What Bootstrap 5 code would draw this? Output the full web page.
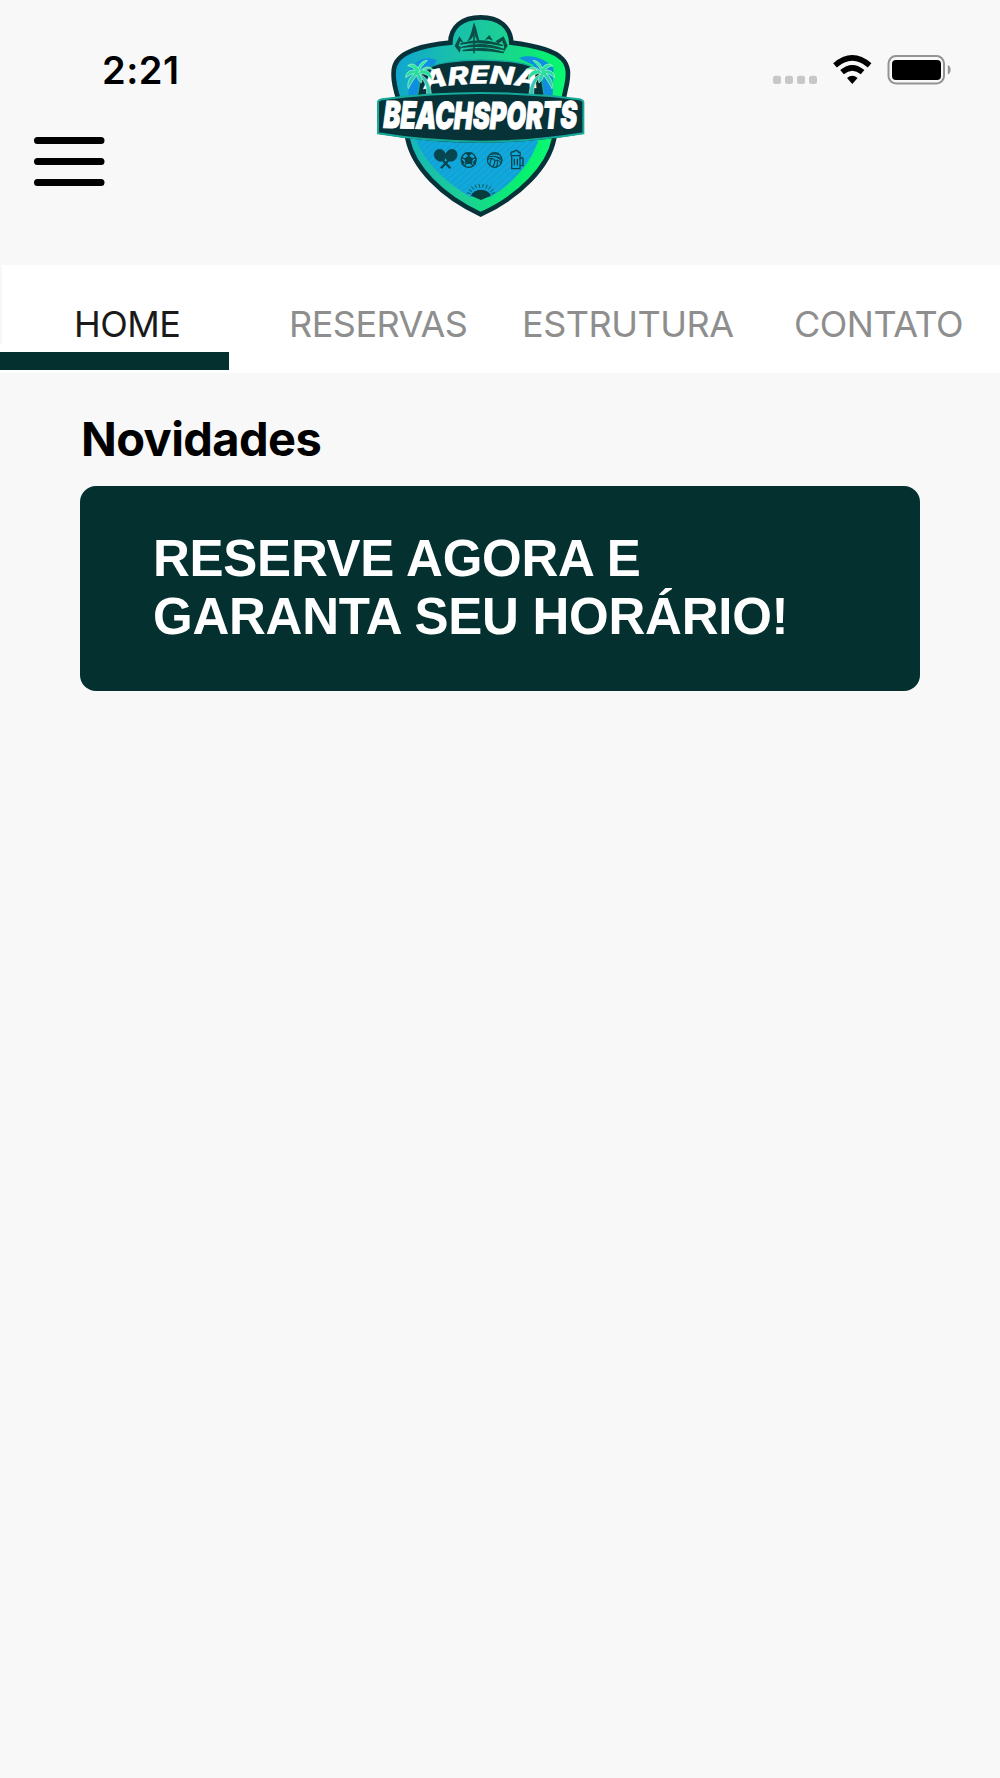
<!DOCTYPE html>
<html lang="pt-BR">
<head>
  <meta charset="UTF-8" />
  <meta name="viewport" content="width=device-width, initial-scale=1.0"/>
  <title>Arena Beachsports</title>
  <link href="https://cdn.jsdelivr.net/npm/bootstrap@5.3.0/dist/css/bootstrap.min.css" rel="stylesheet"/>
  <style>
    body {
      background-color: #f8f8f8;
      font-family: Inter, "Liberation Sans", sans-serif;
      color: #000;
    }
    .app-header {
      height: 265px;
    }
    .header-left {
      width: 360px;
      padding: 48px 0 0 33px;
    }
    .clock {
      font-size: 38px;
      font-weight: 600;
      line-height: 44px;
      padding-left: 69px;
      letter-spacing: 0.5px;
    }
    .menu-btn {
      margin-top: 44px;
    }
    .status-icons {
      padding: 54px 48px 0 0;
    }
    .tab-bar {
      height: 108px;
      background: linear-gradient(#f8f8f8, #f8f8f8) 0 0 / 2px 79px no-repeat #fff;
    }
    .tab-bar .nav-link {
      font-size: 36px;
      line-height: 44px;
      padding: 37px 0 0;
      color: #8e8e8e;
      white-space: nowrap;
      letter-spacing: -0.5px;
    }
    .tab-bar .nav-link.active {
      color: #1a1a1a;
    }
    .tab-home { width: 229px; padding-left: 74px; }
    .tab-reservas { width: 293px; padding-left: 60px; }
    .tab-estrutura { width: 272px; }
    .tab-line {
      height: 18px;
      margin: 6px 0 0 -74px;
      background-color: #043030;
    }
    .content {
      padding: 37px 80px 0;
    }
    .section-title {
      font-size: 47px;
      font-weight: 700;
      line-height: 58px;
      letter-spacing: -0.6px;
      margin: 0 0 18px 1px;
    }
    .banner {
      height: 205px;
      border-radius: 16px;
      background-color: #043030;
      color: #fff;
      padding: 44px 73px;
      font: bold 51px/58px "Liberation Sans", Arial, sans-serif;
      letter-spacing: -0.25px;
    }
  </style>
</head>
<body>

  <!-- Header: clock, menu, logo and status icons -->
  <header class="app-header d-flex align-items-start">
    <div class="header-left">
      <div class="clock">2:21</div>
      <button class="menu-btn btn p-0 border-0 d-block" type="button" aria-label="Menu">
        <svg class="d-block" width="72" height="51" viewBox="0 0 72 51" stroke="#000" stroke-width="7" stroke-linecap="round">
          <path d="M4.5 4.5H68M4.5 25.5H68M4.5 46.5H68"/>
        </svg>
      </button>
    </div>

    <svg width="240" height="230" viewBox="0 0 720 690" role="img" aria-label="Arena Beachsports">
      <defs>
        <linearGradient id="shield" x1="100" y1="230" x2="610" y2="340" gradientUnits="userSpaceOnUse">
          <stop offset="0" stop-color="#0fa6d0"/>
          <stop offset=".25" stop-color="#18bcb0"/>
          <stop offset=".55" stop-color="#1ccf94"/>
          <stop offset=".85" stop-color="#08f070"/>
          <stop offset="1" stop-color="#0cfa74"/>
        </linearGradient>
        <linearGradient id="palmLeft" x2="0" y2="1">
          <stop offset="0" stop-color="#25f58c"/>
          <stop offset="1" stop-color="#2cc0b6"/>
        </linearGradient>
        <pattern id="stripes" width="14" height="14" patternUnits="userSpaceOnUse" patternTransform="rotate(-42)">
          <rect width="14" height="14" fill="#0faadd"/>
          <rect width="14" height="4" fill="#179bcf"/>
        </pattern>
      </defs>

      <!-- Shield -->
      <path d="M362 52C417 52 452 80 454 128C520 136 583 152 607 177C628 198 625 226 621 250L610 300L582 418C565 500 482 588 362 643C242 588 160 500 143 418L116 300C103 260 96 222 104 197C119 153 190 136 271 128C272 80 307 52 362 52Z" fill="url(#shield)" stroke="#083239" stroke-width="14"/>
      <path d="M165 410H538C520 482 460 550 392 590H330C255 545 190 485 165 410Z" fill="url(#stripes)"/>
      <path d="M150 210C160 180 205 165 230 181L180 290H145ZM476 174C515 158 565 180 580 205L578 290H535L520 195Z" fill="#108fe0"/>

      <!-- Sailing crown -->
      <g fill="#0a5049">
        <path d="M322 124C335 103 335 89 342 67C352 90 352 106 359 124C351 126 350 117 343 103C337 113 335 120 322 124Z"/>
        <path d="M374 120L388 105L399 122L386 117ZM406 124L431 109L443 137L431 157L432 137L426 123L415 131Z"/>
        <path d="M298 109L284 138L299 158L303 142L296 137L300 124L312 130Z"/>
        <path d="M301 132Q367 111 429 137Q366 122 301 132ZM304 142Q369 123 433 149Q367 133 304 142ZM308 152Q370 137 432 158Q371 146 308 152Z" stroke="#0a5049" stroke-width="4"/>
        <path d="M342 105V160" stroke="#0a5049" stroke-width="5"/>
      </g>

      <!-- ARENA plate -->
      <path d="M172 290L183 224Q205 194 262 187Q362 173 466 187Q520 194 542 220L553 290Z" fill="#063238" stroke="#12a7a0" stroke-width="4"/>
      <path id="arenaLine" d="M192 268Q365 234 550 268" fill="none"/>
      <text font-family="Inter, sans-serif" font-size="74" font-weight="800" font-style="italic" fill="#fff" stroke="#fff" stroke-width="1"><textPath href="#arenaLine" textLength="344" lengthAdjust="spacingAndGlyphs">ARENA</textPath></text>

      <!-- Palm trees -->
      <g id="palm">
        <path d="M175 221C190 224 211 240 214 284H200C201 252 190 238 174 225Z" fill="#32c8b5" stroke="#c6eee0" stroke-width="2"/>
        <path d="M176 218C184 195 196 190 202 181C190 182 178 190 175 205C169 193 154 188 143 197C157 200 160 205 165 211C148 208 137 219 137 233C147 226 153 222 163 221C145 233 141 252 145 266C154 247 163 237 170 225C172 237 177 243 184 249C188 236 184 228 178 222C191 218 207 226 215 240C218 222 204 208 189 210C202 204 212 207 221 211C211 195 190 199 176 218Z" fill="url(#palmLeft)" stroke="#b7f7d7" stroke-width="2"/>
      </g>
      <use href="#palm" transform="translate(721 0) scale(-1 1)"/>

      <!-- BEACHSPORTS ribbon -->
      <path d="M52 306Q54 299 65 297Q362 258 658 297Q670 299 672 306V401Q515 428 362 428Q205 428 52 401Z" fill="#063238"/>
      <path d="M54 400V306Q56 300 66 298Q362 260 657 298Q668 300 670 306V400Q515 425 362 425Q205 425 54 400Z" fill="none" stroke="#16aa99" stroke-width="6"/>
      <path id="beachLine" d="M70 384Q362 390 664 384" fill="none"/>
      <g transform="translate(0 388) scale(1 1.12) translate(0 -388)">
        <text font-family="Inter, sans-serif" font-size="99" font-weight="900" font-style="italic" fill="#fff" stroke="#fff" stroke-width="3"><textPath href="#beachLine" textLength="582" lengthAdjust="spacingAndGlyphs">BEACHSPORTS</textPath></text>
      </g>

      <!-- Rackets -->
      <g fill="#07464e" stroke="#07464e">
        <ellipse cx="240" cy="466" rx="17" ry="19" transform="rotate(-38 240 466)"/>
        <ellipse cx="274" cy="466" rx="17" ry="19" transform="rotate(38 274 466)"/>
        <path d="M247 479L271 505M267 479L243 505" stroke-width="7"/>
      </g>

      <!-- Football -->
      <g fill="none" stroke="#07464e" stroke-width="4">
        <circle cx="326" cy="480" r="22"/>
        <path d="M326 469L337 477L333 490H319L315 477Z" fill="#07464e"/>
        <path d="M326 469V458M337 477L347 472M333 490L340 499M319 490L312 499M315 477L305 472"/>
        <path d="M318 460L326 466L334 460ZM305 480L312 488L307 492ZM347 480L340 488L345 492Z" fill="#07464e"/>
      </g>

      <!-- Volleyball -->
      <g fill="none" stroke="#07464e" stroke-width="3.5">
        <circle cx="404" cy="480" r="22"/>
        <path d="M384 472Q400 464 424 475M391 463Q405 460 419 464M404 480Q395 470 383 479M404 480Q422 480 423 492M404 480Q406 492 397 501M396 476Q389 482 390 497M412 482Q415 492 408 502M405 471Q414 472 426 483"/>
      </g>

      <!-- Beer mug -->
      <g fill="none" stroke="#07464e" stroke-width="4">
        <path d="M455 468V506H480V464M480 474H489V497H480M454 467C450 459 454 453 461 456C465 449 474 451 475 456C482 456 483 462 479 467ZM463 476V496M472 476V496"/>
      </g>

      <!-- Rising sun -->
      <path d="M333 587Q340 570 363 569Q386 570 393 587L363 600Z" fill="#073b3e"/>
      <path d="M332 581L321 578M336 575L326 568M342 569L334 559M350 565L345 554M359 563L357 552M368 563L370 552M377 565L382 554M385 569L393 559M391 575L401 568M394 581L405 578" stroke="#095b55" stroke-width="3"/>
    </svg>

    <div class="status-icons ms-auto">
      <svg class="d-block" width="180" height="32" viewBox="0 0 180 32">
        <g fill="#c7c7c7">
          <rect x="1" y="21.700" width="8" height="8.300" rx="2.5"/>
          <rect x="13" y="21.700" width="8" height="8.300" rx="2.5"/>
          <rect x="25" y="21.700" width="8" height="8.300" rx="2.5"/>
          <rect x="37" y="21.700" width="8" height="8.300" rx="2.5"/>
        </g>
        <g fill="none" stroke="#000" stroke-width="5.6">
          <path d="M63 11.300Q80.300 -3.500 97.600 11.300"/>
          <path d="M70 18.200Q80.300 9.500 90.600 18.200"/>
        </g>
        <path d="M75 24Q80.300 19.500 85.600 24L80.300 30Z"/>
        <rect x="116.500" y="2" width="55.500" height="27.500" rx="7.500" fill="none" stroke="#949494" stroke-width="2"/>
        <rect x="120" y="6" width="49" height="20" rx="4"/>
        <path d="M175.800 11Q178.600 12 178.600 15.800Q178.600 19.600 175.800 20.500Z" fill="#949494"/>
      </svg>
    </div>
  </header>

  <!-- Tabs -->
  <nav class="tab-bar nav flex-nowrap">
    <div class="tab-home">
      <a class="nav-link active" href="#">HOME</a>
      <div class="tab-line"></div>
    </div>
    <div class="tab-reservas"><a class="nav-link" href="#">RESERVAS</a></div>
    <div class="tab-estrutura"><a class="nav-link" href="#">ESTRUTURA</a></div>
    <div><a class="nav-link" href="#">CONTATO</a></div>
  </nav>

  <!-- News -->
  <main class="content">
    <h1 class="section-title">Novidades</h1>
    <div class="banner">RESERVE AGORA E<br>GARANTA SEU HORÁRIO!</div>
  </main>

  <script src="https://cdn.jsdelivr.net/npm/bootstrap@5.3.0/dist/js/bootstrap.bundle.min.js"></script>
</body>
</html>
